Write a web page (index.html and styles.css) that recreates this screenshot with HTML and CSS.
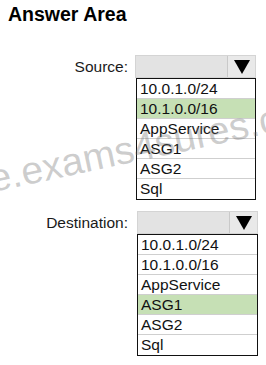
FILE: index.html
```html
<!DOCTYPE html>
<html lang="en">
<head>
  <meta charset="UTF-8">
  <title>Answer Area</title>
  <link rel="stylesheet" href="styles.css">
</head>
<body>
  <h1>Answer Area</h1>

  <div class="field">
    <span class="label">Source:</span>
    <div class="select">
      <div class="value"></div>
      <div class="arrow"><span class="tri"></span></div>
    </div>
    <ul class="options">
      <li>10.0.1.0/24</li>
      <li class="picked">10.1.0.0/16</li>
      <li>AppService</li>
      <li>ASG1</li>
      <li>ASG2</li>
      <li>Sql</li>
    </ul>
  </div>

  <div class="field dest">
    <span class="label">Destination:</span>
    <div class="select">
      <div class="value"></div>
      <div class="arrow"><span class="tri"></span></div>
    </div>
    <ul class="options">
      <li>10.0.1.0/24</li>
      <li>10.1.0.0/16</li>
      <li>AppService</li>
      <li class="picked">ASG1</li>
      <li>ASG2</li>
      <li>Sql</li>
    </ul>
  </div>

  <div class="watermark">e.exams4sures.co</div>
</body>
</html>
```

FILE: styles.css
```css
body {
  margin: 0;
  width: 266px;
  height: 365px;
  overflow: hidden;
  position: relative;
  background: #fff;
  color: #111;
  font-family: "Liberation Sans", Arial, sans-serif;
}

h1 {
  margin: 0;
  padding: 3px 0 0 8px;
  font-size: 19.5px;
  line-height: 22px;
  font-weight: bold;
  color: #000;
}

.field {
  display: grid;
  grid-template-columns: 128px 121px;
  column-gap: 7px;
  margin-top: 30px;
}

.field.dest {
  margin-top: 11px;
  column-gap: 9px;
}

.label {
  grid-column: 1;
  grid-row: 1;
  align-self: center;
  text-align: right;
  font-size: 15.5px;
  color: #1a1a1a;
}

.select {
  grid-column: 2;
  grid-row: 1;
  display: flex;
  height: 23px;
  box-sizing: border-box;
  border: 1px solid #d4d4d4;
  background: #e3e3e3;
}

.value {
  flex: 1;
}

.arrow {
  width: 27px;
  border-left: 1px solid #c9c9c9;
  background: #e9e9e9;
  display: flex;
  align-items: center;
  justify-content: center;
}

.tri {
  width: 0;
  height: 0;
  border-left: 8px solid transparent;
  border-right: 8px solid transparent;
  border-top: 14px solid #000;
}

.options {
  grid-column: 2;
  grid-row: 2;
  list-style: none;
  margin: 0 0 0 1px;
  padding: 0;
  border: 1px solid #111;
  font-size: 15.5px;
}

.dest .options {
  margin-left: 0;
}

.options li {
  height: 19px;
  line-height: 19px;
  padding-left: 3px;
  border-bottom: 1px solid #cfcfcf;
}

.options li:last-child {
  border-bottom: none;
  height: 20px;
}

.options li.picked {
  background: #c6e0b5;
}

.watermark {
  position: absolute;
  left: -6px;
  top: 157px;
  font-size: 39px;
  color: rgba(110, 110, 110, 0.35);
  white-space: nowrap;
  transform: rotate(-12deg);
  transform-origin: left bottom;
  pointer-events: none;
}
```
